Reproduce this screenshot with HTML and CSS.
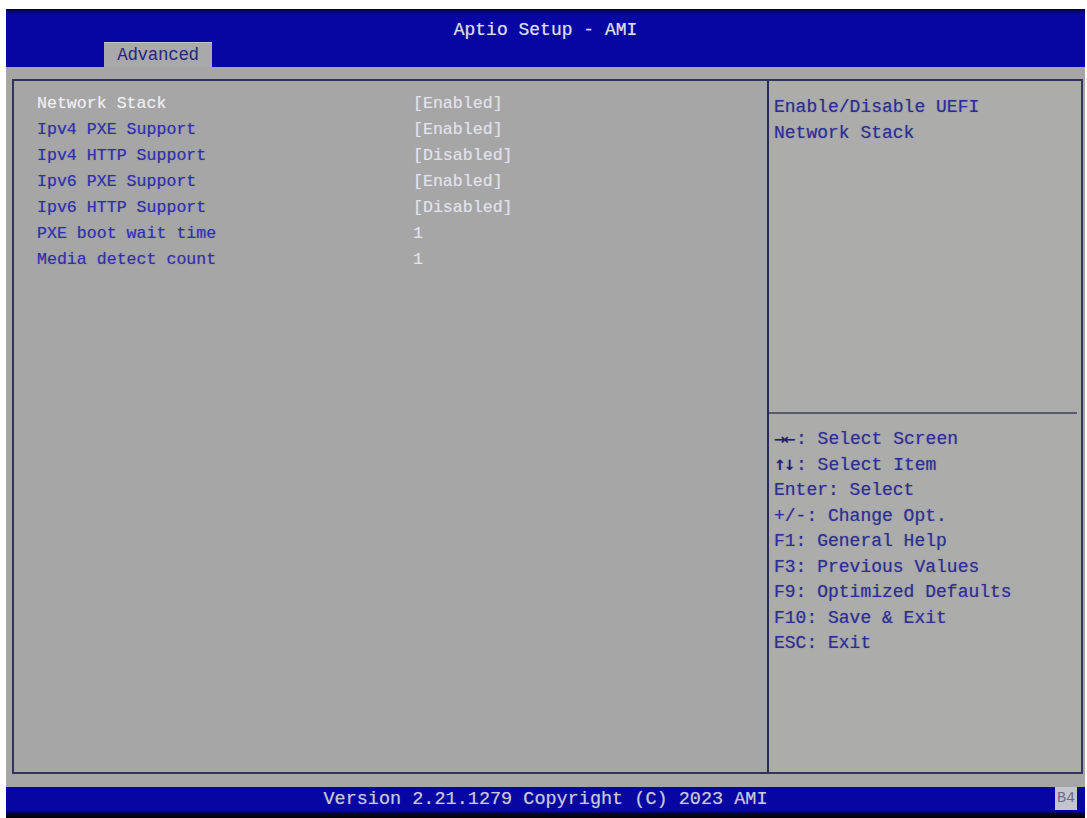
FILE: index.html
```html
<!DOCTYPE html>
<html lang="en">
<head>
    <meta charset="UTF-8">
    <title>Aptio Setup - AMI</title>
    <link rel="stylesheet" href="styles.css">
</head>
<body>
    <div class="screen">
        <div class="header">
            <div class="title">Aptio Setup - AMI</div>
            <div class="tabs">
                <span class="tab">Advanced</span>
            </div>
        </div>

        <div class="main">
            <div class="frame">
                <div class="settings">
                    <div class="row selected"><span>Network Stack</span><span class="value">[Enabled]</span></div>
                    <div class="row"><span>Ipv4 PXE Support</span><span class="value">[Enabled]</span></div>
                    <div class="row"><span>Ipv4 HTTP Support</span><span class="value">[Disabled]</span></div>
                    <div class="row"><span>Ipv6 PXE Support</span><span class="value">[Enabled]</span></div>
                    <div class="row"><span>Ipv6 HTTP Support</span><span class="value">[Disabled]</span></div>
                    <div class="row"><span>PXE boot wait time</span><span class="value">1</span></div>
                    <div class="row"><span>Media detect count</span><span class="value">1</span></div>
                </div>

                <div class="side">
                    <div class="help">
                        Enable/Disable UEFI<br>
                        Network Stack
                    </div>
                    <div class="keys">
                        <div><span class="arrows">&rarr;&larr;</span>: Select Screen</div>
                        <div><span class="arrows">&uarr;&darr;</span>: Select Item</div>
                        <div>Enter: Select</div>
                        <div>+/-: Change Opt.</div>
                        <div>F1: General Help</div>
                        <div>F3: Previous Values</div>
                        <div>F9: Optimized Defaults</div>
                        <div>F10: Save &amp; Exit</div>
                        <div>ESC: Exit</div>
                    </div>
                </div>
            </div>
        </div>

        <div class="footer">
            <span></span>
            <span class="version">Version 2.21.1279 Copyright (C) 2023 AMI</span>
            <span class="code">B4</span>
        </div>
    </div>
</body>
</html>
```

FILE: styles.css
```css
body {
    margin: 0;
    background-color: #fff;
    font-family: 'Liberation Mono', 'DejaVu Sans Mono', monospace;
}

.screen {
    margin: 9px 0 0 6px;
    width: 1079px;
}

/* top bar */
.header {
    height: 58px;
    background: linear-gradient(#04041e 0, #05057a 3px, #0606a2 6px, #0606a2 100%);
    display: flex;
    flex-direction: column;
    justify-content: space-between;
}

.title {
    text-align: center;
    color: #dcdcec;
    font-size: 18px;
    line-height: 20px;
    padding-top: 11px;
    text-shadow: 0 0 1px rgba(220, 220, 240, 0.6);
}

.tabs {
    padding-left: 98px;
    display: flex;
}

.tab {
    width: 108px;
    height: 25px;
    box-sizing: border-box;
    background-color: #a9a9ab;
    border-top: 1px solid #c4c4d0;
    color: #26267a;
    font-size: 17.5px;
    line-height: 25px;
    text-align: center;
    letter-spacing: -0.3px;
}

/* main grey area */
.main {
    background-color: #a6a6a7;
    padding: 12px 2px 13px 6px;
}

.frame {
    height: 691px;
    border: 2px solid #33335e;
    display: flex;
}

.settings {
    width: 730px;
    padding: 10px 0 0 23px;
    border-right: 2px solid #2a2a58;
    font-size: 16.6px;
}

.row {
    display: grid;
    grid-template-columns: 376px auto;
    line-height: 26px;
    color: #3030aa;
    text-shadow: 0 0 1px rgba(60, 60, 190, 0.5);
}

.row .value {
    color: #e2e2ea;
    text-shadow: 0 0 1px rgba(230, 230, 240, 0.5);
}

.row.selected {
    color: #eeeef0;
    text-shadow: 0 0 1px rgba(240, 240, 240, 0.5);
}

.side {
    flex: 1;
    background-color: #acacab;
    display: flex;
    flex-direction: column;
    color: #2e2e92;
    font-size: 18px;
    text-shadow: 0 0 1px rgba(50, 50, 160, 0.5);
}

.help {
    height: 318px;
    padding: 13px 0 0 5px;
    line-height: 26px;
    border-bottom: 2px solid #5a5a70;
    margin-right: 4px;
}

.keys {
    padding: 13px 0 0 5px;
    line-height: 25.5px;
}

.arrows {
    display: inline-block;
    width: 22px;
    font-family: 'DejaVu Sans', sans-serif;
    font-size: 14px;
    font-weight: bold;
    letter-spacing: -2px;
    color: #1e1e70;
}

/* bottom bar */
.footer {
    height: 33px;
    background: linear-gradient(#0606a2 0, #0606a2 24px, #05051e 27px, #000 100%);
    display: grid;
    grid-template-columns: 1fr auto 1fr;
    align-items: start;
}

.version {
    color: #c8c8da;
    font-size: 18.5px;
    line-height: 26px;
    text-shadow: 0 0 1px rgba(200, 200, 220, 0.5);
}

.code {
    justify-self: end;
    margin-right: 8px;
    width: 22px;
    height: 23px;
    background-color: #c4c4cc;
    color: #6a6a88;
    font-size: 15px;
    line-height: 24px;
    text-align: center;
}
```
